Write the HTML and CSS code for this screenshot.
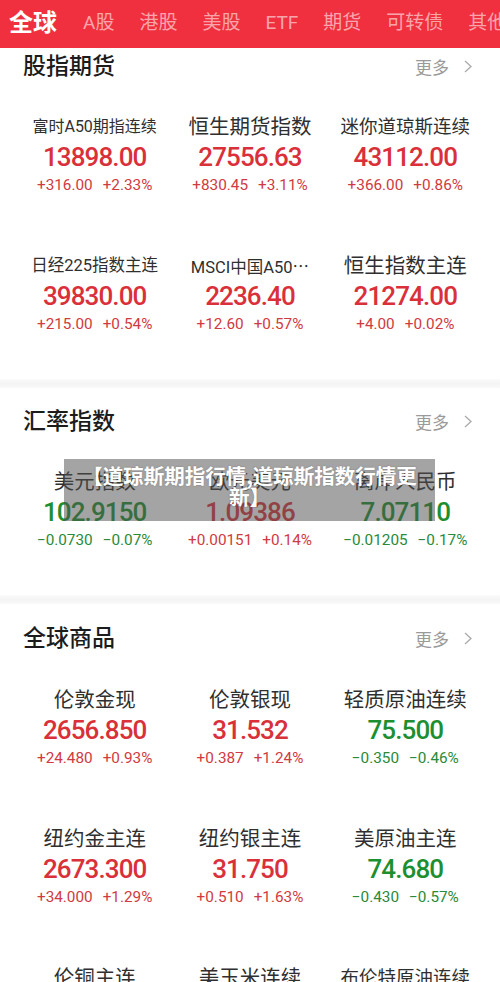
FILE: index.html
```html
<!DOCTYPE html>
<html lang="zh-CN">
<head>
<meta charset="utf-8">
<title>行情</title>
<link rel="stylesheet" href="styles.css">
</head>
<body>
<header class="tabs">
  <span class="tab active">全球</span>
  <span class="tab">A股</span>
  <span class="tab">港股</span>
  <span class="tab">美股</span>
  <span class="tab">ETF</span>
  <span class="tab">期货</span>
  <span class="tab">可转债</span>
  <span class="tab">其他</span>
</header>

<section class="market market-first">
  <div class="sec-head">
    <h2 class="sec-title">股指期货</h2>
    <span class="more">更多<svg class="chev" viewBox="0 0 8 13" width="8" height="13"><polyline points="1,1 7,6.5 1,12" fill="none" stroke="#aaa" stroke-width="1.3"/></svg></span>
  </div>
  <div class="grid">
    <div class="item up">
      <div class="name nm-16">富时A50期指连续</div>
      <div class="value">13898.00</div>
      <div class="change"><span>+316.00</span><span>+2.33%</span></div>
    </div>
    <div class="item up">
      <div class="name">恒生期货指数</div>
      <div class="value">27556.63</div>
      <div class="change"><span>+830.45</span><span>+3.11%</span></div>
    </div>
    <div class="item up">
      <div class="name nm-md">迷你道琼斯连续</div>
      <div class="value">43112.00</div>
      <div class="change"><span>+366.00</span><span>+0.86%</span></div>
    </div>
    <div class="item up">
      <div class="name nm-xs">日经225指数主连</div>
      <div class="value">39830.00</div>
      <div class="change"><span>+215.00</span><span>+0.54%</span></div>
    </div>
    <div class="item up">
      <div class="name nm-xs">MSCI中国A50<span class="ell">⋯</span></div>
      <div class="value">2236.40</div>
      <div class="change"><span>+12.60</span><span>+0.57%</span></div>
    </div>
    <div class="item up">
      <div class="name">恒生指数主连</div>
      <div class="value">21274.00</div>
      <div class="change"><span>+4.00</span><span>+0.02%</span></div>
    </div>
  </div>
</section>

<div class="divider"></div>

<section class="market">
  <div class="sec-head">
    <h2 class="sec-title">汇率指数</h2>
    <span class="more">更多<svg class="chev" viewBox="0 0 8 13" width="8" height="13"><polyline points="1,1 7,6.5 1,12" fill="none" stroke="#aaa" stroke-width="1.3"/></svg></span>
  </div>
  <div class="grid">
    <div class="item down">
      <div class="name">美元指数</div>
      <div class="value">102.9150</div>
      <div class="change"><span>−0.0730</span><span>−0.07%</span></div>
    </div>
    <div class="item up">
      <div class="name">欧元美元</div>
      <div class="value">1.09386</div>
      <div class="change"><span>+0.00151</span><span>+0.14%</span></div>
    </div>
    <div class="item down">
      <div class="name">离岸人民币</div>
      <div class="value">7.07110</div>
      <div class="change"><span>−0.01205</span><span>−0.17%</span></div>
    </div>
  </div>
</section>

<div class="divider"></div>

<section class="market market-last">
  <div class="sec-head">
    <h2 class="sec-title">全球商品</h2>
    <span class="more">更多<svg class="chev" viewBox="0 0 8 13" width="8" height="13"><polyline points="1,1 7,6.5 1,12" fill="none" stroke="#aaa" stroke-width="1.3"/></svg></span>
  </div>
  <div class="grid">
    <div class="item up">
      <div class="name">伦敦金现</div>
      <div class="value">2656.850</div>
      <div class="change"><span>+24.480</span><span>+0.93%</span></div>
    </div>
    <div class="item up">
      <div class="name">伦敦银现</div>
      <div class="value">31.532</div>
      <div class="change"><span>+0.387</span><span>+1.24%</span></div>
    </div>
    <div class="item down">
      <div class="name">轻质原油连续</div>
      <div class="value">75.500</div>
      <div class="change"><span>−0.350</span><span>−0.46%</span></div>
    </div>
    <div class="item up">
      <div class="name">纽约金主连</div>
      <div class="value">2673.300</div>
      <div class="change"><span>+34.000</span><span>+1.29%</span></div>
    </div>
    <div class="item up">
      <div class="name">纽约银主连</div>
      <div class="value">31.750</div>
      <div class="change"><span>+0.510</span><span>+1.63%</span></div>
    </div>
    <div class="item down">
      <div class="name">美原油主连</div>
      <div class="value">74.680</div>
      <div class="change"><span>−0.430</span><span>−0.57%</span></div>
    </div>
    <div class="item">
      <div class="name">伦铜主连</div>
    </div>
    <div class="item">
      <div class="name">美玉米连续</div>
    </div>
    <div class="item">
      <div class="name nm-md">布伦特原油连续</div>
    </div>
  </div>
</section>

<div class="toast">【道琼斯期指行情,道琼斯指数行情更新】</div>
</body>
</html>
```

FILE: styles.css
```css
* { box-sizing: border-box; }

html, body {
  margin: 0;
  padding: 0;
  background: #ffffff;
}

body {
  font-family: "Roboto", "Noto Sans CJK SC", sans-serif;
  color: #333333;
  position: relative;
  overflow: hidden;
  height: 982px;
}

/* top tab bar */
.tabs {
  height: 48px;
  background: #f0303e;
  display: flex;
  align-items: center;
  gap: 25px;
  padding: 0 0 3px 9px;
  white-space: nowrap;
  overflow: hidden;
}

.tab {
  font-size: 19px;
  color: rgba(255, 255, 255, 0.58);
  flex: none;
  line-height: 1;
}

.tab.active {
  font-size: 24px;
  font-weight: 700;
  color: #ffffff;
  margin-right: 1px;
}

/* sections */
.market {
  padding: 15px 0 43px;
}

.market-first {
  padding-top: 0;
}

.market-last {
  padding-top: 16px;
}

.sec-head {
  height: 36px;
  display: flex;
  align-items: center;
  justify-content: space-between;
  padding: 0 28px 0 23px;
}

.sec-title {
  margin: 0;
  font-size: 23px;
  font-weight: 500;
  color: #1c1c1c;
  line-height: 1;
}

.more {
  display: flex;
  align-items: center;
  gap: 15px;
  font-size: 17px;
  color: #9a9a9a;
}

.chev {
  display: block;
}

.grid {
  display: grid;
  grid-template-columns: repeat(3, 1fr);
  row-gap: 55px;
  padding: 29px 17px 0;
}

.market-last .grid {
  padding-top: 30px;
}

.item {
  text-align: center;
}

.name {
  height: 28px;
  line-height: 28px;
  font-size: 20.5px;
  color: #2f2f2f;
  white-space: nowrap;
}

.nm-md { font-size: 18.5px; }
.nm-16 { font-size: 16px; }
.nm-xs { font-size: 16.5px; }

.ell {
  font-family: "Noto Sans CJK SC", sans-serif;
}

.value {
  height: 32px;
  line-height: 32px;
  font-size: 26px;
  font-weight: 500;
  letter-spacing: -0.9px;
}

.change {
  height: 24px;
  display: flex;
  justify-content: center;
  align-items: center;
  gap: 10px;
  font-size: 15.3px;
}

.up .value { color: #d9303a; }
.up .change { color: #d03a40; }
.down .value { color: #1d8f2f; }
.down .change { color: #2a8a38; }

.divider {
  height: 9px;
  background: linear-gradient(#fbfbfb, #f4f4f4 50%, #f9f9f9);
}

/* overlay caption */
.toast {
  position: absolute;
  left: 64px;
  top: 459px;
  width: 371px;
  height: 62px;
  padding: 6px 10px 0;
  background: rgba(80, 80, 80, 0.52);
  color: #ffffff;
  font-family: "Noto Sans CJK SC", sans-serif;
  font-weight: 700;
  font-size: 20.5px;
  line-height: 21px;
  text-align: center;
  text-shadow: 0 0 2px rgba(0, 0, 0, 0.25);
}
```
